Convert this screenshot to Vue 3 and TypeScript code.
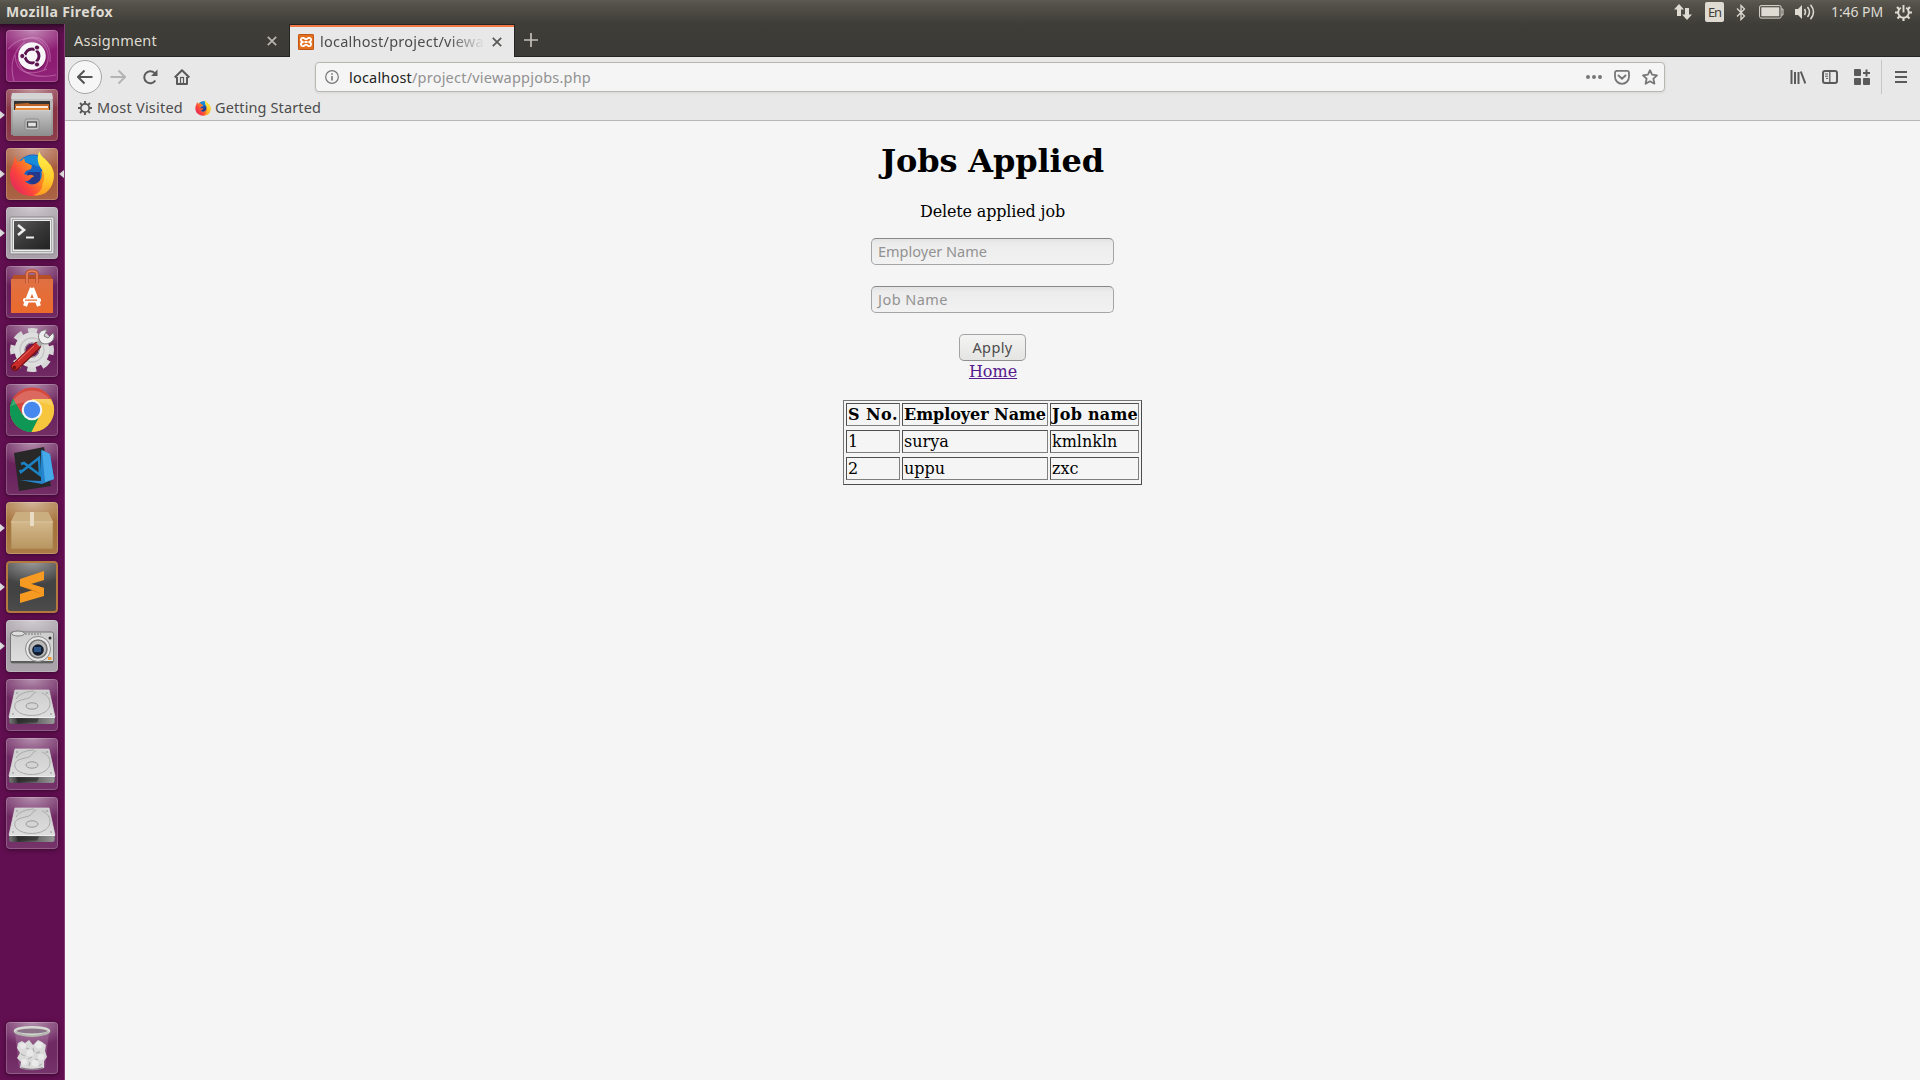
<script setup lang="ts">
type Tile = { kind: string; bg: string; running?: boolean; active?: boolean }

const tiles: Tile[] = [
  { kind: 'dash', bg: '#8c1b72' },
  { kind: 'files', bg: '#893544', running: true },
  { kind: 'firefox', bg: '#a75c3c', running: true, active: true },
  { kind: 'terminal', bg: '#a59ca5', running: true },
  { kind: 'software', bg: '#691f5b' },
  { kind: 'settings', bg: '#691f5b' },
  { kind: 'chrome', bg: '#6b235d' },
  { kind: 'code', bg: '#6b235d' },
  { kind: 'box', bg: '#a8743c', running: true },
  { kind: 'sublime', bg: '#434343', running: true },
  { kind: 'camera', bg: '#a79fa7', running: true },
  { kind: 'drive', bg: '#6f2963' },
  { kind: 'drive', bg: '#6f2963' },
  { kind: 'drive', bg: '#6f2963' },
  { kind: 'trash', bg: '#6f2963' },
]

const headers = [
  { text: 'S No.', width: 50 },
  { text: 'Employer Name', width: 142 },
  { text: 'Job name', width: 86 },
]
const rows = [
  ['1', 'surya', 'kmlnkln'],
  ['2', 'uppu', 'zxc'],
]

// Spaces the letters of a label so that it takes exactly the given width.
const vFit = {
  mounted(el: HTMLElement, binding: { value: number }) {
    const n = (el.textContent ?? '').length
    const w = el.getBoundingClientRect().width
    if (n > 0) el.style.letterSpacing = `${(binding.value - w) / n}px`
  },
}
</script>

<template>
  <div class="desktop">
    <header class="panel">
      <span v-fit="107" class="title">Mozilla Firefox</span>
      <div class="tray">
        <svg width="18" height="18" viewBox="0 0 18 18" fill="#dfdbd2"><path d="M5 1 0 6.500h3V13h4V6.500h3zM13 17l-5-5.500h3V5h4v6.500h3z" /></svg>
        <span class="lang"><span v-fit="13">En</span></span>
        <svg class="bt" width="10" height="17" viewBox="0 0 10 17" fill="none" stroke="#dfdbd2" stroke-width="1.300"><path d="M1 4.500 8.500 12 5 15.500v-14L8.500 5 1 12.500" /></svg>
        <svg class="bat" width="25" height="14" viewBox="0 0 25 14"><rect x=".6" y=".6" width="21.500" height="12.500" rx="1.500" fill="none" stroke="#dfdbd2" /><rect x="2.300" y="2.300" width="18" height="9" fill="#dfdbd2" /><path d="M22.500 4h1.500v6h-1.500" fill="none" stroke="#dfdbd2" /></svg>
        <svg class="vol" width="21" height="16" viewBox="0 0 21 16"><path d="M0 5h3l4-4v14l-4-4H0z" fill="#dfdbd2" /><g fill="none" stroke="#dfdbd2" stroke-width="1.500"><path d="M9.500 5q2 3 0 6" /><path d="M12.500 3q4 5 0 10" /><path d="M15.500.800q6 7.200 0 14.400" /></g></svg>
        <span v-fit="52" class="clock">1:46 PM</span>
        <svg class="cog" width="17" height="17" viewBox="0 0 17 17" fill="none" stroke="#dfdbd2"><path d="M5.800 3.800a5.300 5.300 0 1 0 5.400 0" stroke-width="1.900" /><path d="M8.500 1v7.500" stroke-width="1.900" /><path d="M2 3l2.200 2.200M15 3l-2.200 2.200M0 8.500h3M17 8.500h-3M2.500 14.500l2-2M14.500 14.500l-2-2M8.500 17v-3" stroke-width="2.200" /></svg>
      </div>
    </header>

    <div class="main">
      <aside class="launcher">
        <div v-for="(t, i) in tiles" :key="i" class="slot" :class="{ last: t.kind === 'trash' }">
          <span v-if="t.running" class="arrow" />
          <span v-if="t.active" class="arrow right" />
          <div class="tile" :class="t.kind" :style="{ backgroundColor: t.bg }">
            <svg width="52" height="52" viewBox="0 0 52 52">
              <template v-if="t.kind === 'dash'">
                <g fill="none" stroke="#e7a9da" stroke-opacity=".38" stroke-width="1.200">
                  <path d="M2 19C12 8 27 4 36 13c8 7 8 18 2 27" /><path d="M8 51C3 34 8 20 19 12" /><path d="M17 10c18-8 29 5 27 22" /><path d="M9 25c1 18 13 22 32 14" /><path d="M50 45C35 48 14 47 12 29" />
                </g>
                <circle cx="26" cy="27" r="14" fill="#44073a" fill-opacity=".35" />
                <circle cx="26" cy="26" r="13.800" fill="#f8f6f8" />
                <circle cx="26" cy="26" r="7" fill="none" stroke="#5c1450" stroke-width="3" />
                <g stroke="#f8f6f8" stroke-width="1.300"><path d="M26 26 14 26M26 26l6-10.500M26 26l6 10.500" /></g>
                <g fill="#5c1450" stroke="#f8f6f8"><circle cx="16.300" cy="26" r="2.600" /><circle cx="31" cy="17.500" r="2.600" /><circle cx="31" cy="34.500" r="2.600" /></g>
              </template>
              <template v-else-if="t.kind === 'files'">
                <path d="M6 5h40l1 9v32H5V14z" fill="url(#metal)" /><path d="M6 4h40l1 6H5z" fill="#d4d4d4" />
                <path d="M8 12h36v10H8z" fill="#343333" /><path d="M9 15l13-1 2 1h19v8H9z" fill="#bd6429" /><path d="M10 17h32v5H10z" fill="#f8ebdb" /><path d="M9 19h34v4H9z" fill="#e9893a" />
                <path d="M7 21h38v26H7z" fill="url(#metal)" /><path d="M7 21.500h38" stroke="#d0d0d0" />
                <rect x="19" y="30" width="14" height="11" rx="2" fill="#c1c1c1" stroke="#8b8b8b" /><rect x="21.500" y="33" width="9" height="5" fill="#e2e2e2" stroke="#4a4a4a" stroke-width="1.300" />
              </template>
              <template v-else-if="t.kind === 'firefox'">
                <use href="#fx" />
              </template>
              <template v-else-if="t.kind === 'terminal'">
                <rect x="4" y="10" width="44" height="37" rx="1.500" fill="#ddd" stroke="#8a858a" /><rect x="6.500" y="12.500" width="39" height="32" fill="#eee" stroke="#aaa" /><rect x="8" y="14" width="36" height="28.500" fill="url(#screen)" />
                <path d="M12 18l6 5-6 5" fill="none" stroke="#eee" stroke-width="2.600" /><path d="M20 30.500h8" stroke="#eee" stroke-width="2" />
              </template>
              <template v-else-if="t.kind === 'software'">
                <path d="M8 9h36l3 5H5z" fill="#b64f24" /><path d="M5 13h42v34H5z" fill="url(#bag)" />
                <path d="M21 17V8q0-3 5-3t5 3v9" fill="none" stroke="#ba4f26" stroke-width="3.500" /><path d="M21 17V8q0-3 5-3t5 3v9" fill="none" stroke="#e98561" stroke-width="1.600" />
                <path d="M26 22l-7 18M26 22l7 18" stroke="#fff" stroke-width="4.200" /><rect x="17" y="32" width="18" height="4.500" rx="2" fill="#fff" /><path d="M19 34.200h12" stroke="#e66a2c" stroke-width="1.300" />
              </template>
              <template v-else-if="t.kind === 'settings'">
                <circle cx="26" cy="25" r="18.500" fill="none" stroke="#d6d6d6" stroke-width="7" stroke-dasharray="8.530 6" transform="rotate(-13 26 25)" />
                <circle cx="26" cy="25" r="12.500" fill="none" stroke="#dedede" stroke-width="10" /><circle cx="26" cy="25" r="12" fill="none" stroke="#c4c4c4" stroke-width="1.300" /><circle cx="26" cy="25" r="7" fill="#691f5b" stroke="#aaa" />
                <path d="M9 42 31 21" stroke="#771215" stroke-width="8" stroke-linecap="round" /><path d="M9 41.500 30.500 21" stroke="#c92b29" stroke-width="6" stroke-linecap="round" /><path d="M12 36 28 21" stroke="#e6736e" stroke-width="1" />
                <path d="M32 20l5-5" stroke="#aaa" stroke-width="5" /><path d="M41 5c-6-1-10 4-8 9 2 6 8 6 12 3 3-2 4-6 2-9l-5 5-4-2z" fill="#eee" stroke="#777" />
                <circle cx="8.500" cy="42.500" r="1.700" fill="#6b1014" />
              </template>
              <template v-else-if="t.kind === 'chrome'">
                <circle cx="26" cy="26" r="22" fill="#f4c23a" /><path d="M26 26 6.950 15A22 22 0 0 1 45 15z" fill="#dc4c3f" /><path d="M26 26h10.500L25.500 48A22 22 0 0 1 6.950 15z" fill="#0f9855" /><path d="M26 26V15h19a22 22 0 0 1-19.500 33l10-17z" fill="#f7c63d" /><path d="M26 15h19.500a22 22 0 0 0-38.500-.500L16 31z" fill="#d4493e" /><path d="M7 15l9.500 16L26 37l5-2-6 13A22 22 0 0 1 7 15z" fill="#0f9855" />
                <circle cx="26" cy="26" r="10.300" fill="#f5f5f5" /><circle cx="26" cy="26" r="8.200" fill="#4688ee" />
                <path d="M5 22a22 22 0 0 1 42 0q-20-9-42 0" fill="#fff" opacity=".18" />
              </template>
              <template v-else-if="t.kind === 'code'">
                <path d="M8 10 38 4l7 39-32 5z" fill="#282829" /><path d="M35 7l9 4 4 25-12 5-22-4 21 1z" fill="#2584cb" /><path d="M36 7l8 4 4 25-9 3z" fill="#45a9ea" />
                <path d="M15 21l3-1 16 12-1-17-18 14-1-2" fill="none" stroke="#1b82c4" stroke-width="2.500" />
              </template>
              <template v-else-if="t.kind === 'box'">
                <path d="M10 10h32l5 10v27H5V20z" fill="#d8be91" /><path d="M10 10h32l5 10H5z" fill="#cbae80" /><path d="M5 20h42v27H5z" fill="url(#carton)" />
                <rect x="5" y="20" width="42" height="27" fill="none" stroke="#a7854f" stroke-opacity=".7" /><path d="M5 20h42" stroke="#e8d6b5" /><path d="M24 10h4v14h-4z" fill="#e9dcc2" />
              </template>
              <template v-else-if="t.kind === 'sublime'">
                <path d="M14 18 38 10v9l-13 4 13 4v8L14 42v-9l13-4-13-4z" fill="#f69a22" /><path d="M14 25v-7l11 5 13 4v7l-11-5z" fill="#f69a22" /><path d="M14 25l24 9-11-5 0 0z" fill="#db7a16" />
              </template>
              <template v-else-if="t.kind === 'camera'">
                <rect x="4.500" y="12" width="43" height="31" rx="2" fill="url(#disk)" stroke="#777" /><path d="M5 42h42" stroke="#5e5e5e" stroke-width="1.800" /><ellipse cx="12" cy="13.500" rx="6.500" ry="2.500" fill="#ddd" stroke="#777" /><path d="M19 14h16" stroke="#777" stroke-dasharray="2 1" />
                <circle cx="32" cy="29" r="12.500" fill="#e8e8e8" stroke="#888" /><circle cx="32" cy="29" r="9" fill="#bbb" stroke="#777" stroke-width="1.600" /><circle cx="32" cy="30" r="5.800" fill="#131d2d" /><rect x="28" y="27" width="7" height="5" fill="#2c5589" />
                <circle cx="44" cy="18" r="1.500" fill="#292929" /><rect x="42" y="37" width="3.500" height="3" fill="#ef9a2e" />
              </template>
              <template v-else-if="t.kind === 'drive'">
                <path d="M9 11h34l6 27v6H3v-6z" fill="#555" /><path d="M9 11h34l6 27H3z" fill="url(#disk)" stroke="#ddd" stroke-width=".7" /><path d="M3.500 38.500h45V43a2 2 0 0 1-2 2H5.500a2 2 0 0 1-2-2z" fill="url(#edge)" />
                <path d="M10 39.500h23l-2 4H12z" fill="#292929" opacity=".65" /><path d="M3 38.500h46" stroke="#eee" />
                <path d="M10 20C14 13 25 12 28 12M36 14c9 3 11 14 3 19-9 6-27 4-30-4-2-8 8-8 14-10 4-2 3-5 7-6" fill="none" stroke="#a9a9a9" />
                <ellipse cx="26" cy="27" rx="6" ry="3.200" fill="#d4d4d4" stroke="#999" /><g fill="#888"><circle cx="11" cy="14" r=".8" /><circle cx="41" cy="14" r=".8" /><circle cx="7" cy="35" r=".8" /><circle cx="45" cy="35" r=".8" /></g>
              </template>
              <template v-else>
                <path d="M9 10h34l-4 36H13z" fill="#b98fb4" fill-opacity=".33" /><path d="M12 21l4-2 3 2 4-3 4 5 5-5 4 2 4 3-1 6 2 6-3 4v7q-12 3-24 0l1-6-4-4 3-5-3-5z" fill="#dadada" />
                <g fill="#e9e9e9"><circle cx="17" cy="24" r="3" /><circle cx="33" cy="23" r="3.500" /><circle cx="24" cy="31" r="3.500" /><circle cx="35" cy="35" r="3" /><circle cx="18" cy="40" r="3" /><circle cx="29" cy="41" r="3.500" /></g>
                <path d="M20 26l3 1M27 26l1 4M30 31l4-1M15 32l4 2M22 37l4-2M32 38l-3-1M23 44l1-4M36 42l-3 2" fill="none" stroke="#b4b4b4" stroke-width="1.300" /><path d="M15 46q11 3 22 0" fill="none" stroke="#8d7a8b" stroke-width="1.500" />
                <ellipse cx="26" cy="9" rx="17" ry="3.800" fill="#8c7588" stroke="#d6d8d3" stroke-width="2.600" /><path d="M9 10q17 8 34 0" fill="none" stroke="#b5b8b1" stroke-width="2" />
              </template>
            </svg>
          </div>
        </div>
      </aside>

      <section class="browser">
        <nav class="tabs">
          <div class="tab">
            <span v-fit="83" class="label">Assignment</span>
            <svg class="x" width="10" height="10" viewBox="0 0 10 10"><path d="M.800.800l8.400 8.400M9.200.800.800 9.200" stroke="#bab6af" stroke-width="1.700" /></svg>
          </div>
          <div class="tab current">
            <svg class="fav" width="16" height="16" viewBox="0 0 16 16"><rect width="16" height="16" rx="1.500" fill="#e4701e" /><rect x=".5" y=".5" width="15" height="15" rx="1" fill="none" stroke="#bd5718" /><path d="M5.500 8C2 7.500 2.300 3.800 5 3.900c1.600.1 2 1.500 3 1.500s1.400-1.400 3-1.500C13.700 3.800 14 7.500 10.500 8c3.500.5 3.200 4.200.5 4.100-1.600-.1-2-1.500-3-1.500s-1.400 1.400-3 1.500C2.300 12.200 2 8.500 5.500 8zM6.500 8h3" fill="none" stroke="#fff" stroke-width="1.800" /></svg>
            <span class="clip"><span v-fit="173" class="label">localhost/project/viewap</span></span>
            <svg class="x" width="10" height="10" viewBox="0 0 10 10"><path d="M.800.800l8.400 8.400M9.200.800.800 9.200" stroke="#5b5b58" stroke-width="1.800" /></svg>
          </div>
          <svg class="plus" width="14" height="14" viewBox="0 0 14 14"><path d="M7 0v14M0 7h14" stroke="#c3bfb9" stroke-width="1.700" /></svg>
        </nav>

        <div class="toolbar">
          <span class="back"><svg width="16" height="16" viewBox="0 0 16 16" fill="none" stroke="#555" stroke-width="2"><path d="M15.500 8H1.500M7.500 1.500 1 8l6.500 6.500" /></svg></span>
          <svg class="fwd" width="16" height="16" viewBox="0 0 16 16" fill="none" stroke="#b4b4b4" stroke-width="2"><path d="M.500 8h14M8.500 1.500 15 8l-6.500 6.500" /></svg>
          <svg class="reload" width="16" height="16" viewBox="0 0 16 16" fill="none" stroke="#5a5a5a" stroke-width="2"><path d="M13.300 11.500A6 6 0 1 1 12.500 4" /><path d="M15.500.500V7H9z" fill="#5a5a5a" stroke="none" /></svg>
          <svg class="home" width="16" height="16" viewBox="0 0 16 16" fill="none" stroke="#5a5a5a" stroke-width="2"><path d="M.700 8.500 8 1.300l7.300 7.200M3 8v7h10V8" stroke-linejoin="round" /><rect x="6.500" y="8.500" width="3" height="6" stroke-width="1.200" /></svg>
          <div class="url">
            <svg width="14" height="14" viewBox="0 0 14 14"><circle cx="7" cy="7" r="6.300" fill="none" stroke="#777" stroke-width="1.200" /><path d="M7 6v4.500M7 3.200v1.600" stroke="#777" stroke-width="1.600" /></svg>
            <span v-fit="63" class="host">localhost</span><span v-fit="179" class="path">/project/viewappjobs.php</span>
            <svg class="acts" width="72" height="16" viewBox="0 0 72 16" fill="none" stroke="#777">
              <g fill="#777" stroke="none"><circle cx="2" cy="8" r="2" /><circle cx="8" cy="8" r="2" /><circle cx="14" cy="8" r="2" /></g>
              <path d="M30 1.500h11q2 0 2 2V7.500a7 7 0 0 1-14 0V3.500q0-2 2-2z" stroke-width="1.800" transform="translate(0 .3)" /><path d="M32.500 6.500 36 9.800l3.500-3.300" stroke-width="1.900" stroke-linecap="round" />
              <path d="M64 1.200l2.100 4.500 4.900.600-3.600 3.400 1 5L64 12.300l-4.400 2.400 1-5L57 6.300l4.900-.6z" stroke-width="1.800" stroke-linejoin="round" />
            </svg>
          </div>
          <div class="tools">
            <svg width="16" height="16" viewBox="0 0 16 16" stroke="#5a5a5a" stroke-width="2"><path d="M1.500 1v14M5 3v12M8.500 3v12M10.800 2.500l4.500 12" /></svg>
            <svg width="16" height="16" viewBox="0 0 16 16" fill="none" stroke="#5a5a5a"><rect x="1" y="2" width="14" height="12" rx="2" stroke-width="2" /><path d="M7.800 2v12" stroke-width="1.300" /><path d="M3 5h3M3 7.200h3M4 9.400h2" /></svg>
            <svg width="16" height="16" viewBox="0 0 16 16" fill="#5a5a5a"><rect y="0" width="7" height="7" rx="1" /><rect y="9" width="7" height="7" rx="1" /><rect x="9" y="9" width="7" height="7" rx="1" /><path d="M11.500 0.500h2v2.500H16v2h-2.500v2.500h-2V5H9V3h2.500z" /></svg>
            <i class="sep" />
            <svg class="burger" width="12" height="12" viewBox="0 0 12 12" stroke="#5a5a5a" stroke-width="2"><path d="M0 1h12M0 6h12M0 11h12" /></svg>
          </div>
        </div>

        <div class="bookmarks">
          <svg width="14" height="14" viewBox="0 0 14 14" fill="none" stroke="#555"><circle cx="7" cy="7" r="4.200" stroke-width="1.700" /><path d="M7 0v2.500M7 14v-2.500M0 7h2.500M14 7h-2.500M2 2l1.800 1.800M12 12l-1.800-1.800M2 12l1.800-1.800M12 2l-1.800 1.800" stroke-width="1.900" /></svg>
          <span v-fit="86" class="label">Most Visited</span>
          <svg class="fox" width="16" height="16" viewBox="3 3 46 46"><use href="#fx" /></svg>
          <span v-fit="106" class="label">Getting Started</span>
        </div>

        <main class="page">
          <h1><span v-fit="223">Jobs Applied</span></h1>
          <p><span v-fit="145">Delete applied job</span></p>
          <div class="field"><span v-fit="109">Employer Name</span></div>
          <div class="field"><span v-fit="70">Job Name</span></div>
          <button type="button"><span v-fit="40">Apply</span></button>
          <a>Home</a>
          <table>
            <tbody>
              <tr><th v-for="h in headers" :key="h.text"><span v-fit="h.width">{{ h.text }}</span></th></tr>
              <tr v-for="r in rows" :key="r[0]"><td v-for="c in r" :key="c">{{ c }}</td></tr>
            </tbody>
          </table>
        </main>
      </section>
    </div>

    <svg class="defs" width="0" height="0">
      <defs>
        <linearGradient id="metal" x2="0" y2="1"><stop stop-color="#c7c7c7" /><stop offset="1" stop-color="#8d8d8d" /></linearGradient>
        <linearGradient id="screen" x2="1" y2="1"><stop stop-color="#5a5a5a" /><stop offset=".5" stop-color="#383838" /><stop offset="1" stop-color="#222" /></linearGradient>
        <linearGradient id="bag" x2="0" y2="1"><stop stop-color="#df7044" /><stop offset="1" stop-color="#ea6a2b" /></linearGradient>
        <linearGradient id="carton" x2="0" y2="1"><stop stop-color="#d3b88a" /><stop offset="1" stop-color="#b79560" /></linearGradient>
        <linearGradient id="disk" x2="0" y2="1"><stop stop-color="#cdcdcd" /><stop offset="1" stop-color="#dedede" /></linearGradient>
        <linearGradient id="edge"><stop stop-color="#777" /><stop offset=".2" stop-color="#333" /><stop offset="1" stop-color="#999" /></linearGradient>
        <linearGradient id="flame" x1=".9" y1=".2" x2=".1" y2=".75"><stop stop-color="#ffc52e" /><stop offset=".4" stop-color="#ff8a1f" /><stop offset=".75" stop-color="#fb453c" /><stop offset="1" stop-color="#ea2f55" /></linearGradient>
        <linearGradient id="tail" x2="0" y2="1"><stop stop-color="#fff04d" /><stop offset=".6" stop-color="#ffd02e" /><stop offset="1" stop-color="#ff9a20" /></linearGradient>
        <symbol id="fx" viewBox="0 0 52 52" width="52" height="52">
          <circle cx="27" cy="23" r="16.500" fill="#1764c4" /><path d="M14 13C20 6 32 5 37 12L33 19 26 16z" fill="#179be4" opacity=".7" />
          <path d="M22 24h12v10q-6 6-14-2z" fill="#25398c" />
          <path d="M9 8l2.500 6 4.500-1.500L18 10l1 4 7 3.500-1 3.500-5 2-2 3 4 1.500c3-1.500 5-.5 6 1-4 1-3 5-9 4.500 3 4 9 4.500 13 1.500 4-3 4-7 3.500-11L44 16c4 6 5 11 3 17-3 9-11 15-21 15C13 48 4 39 4 27c0-4 1-8 3-11z" fill="url(#flame)" />
          <path d="M33.500 3c0 5 6 7 10 13 6 9 6 22-4 29-4 2-9 3-12 2 6-2 9-6 9-11 3-6 2-11-1-15-4-5-5-12-2-18z" fill="url(#tail)" />
        </symbol>
      </defs>
    </svg>
  </div>
</template>

<style>
body { overflow: hidden; }
</style>

<style scoped>
* { box-sizing: border-box; }
svg { display: block; flex: none; }
.desktop { width: 1920px; height: 1080px; display: flex; flex-direction: column; font: 14.5px/20px "Noto Sans", "Open Sans", sans-serif; color: #4c4c4c; overflow: hidden; }
.defs { position: absolute; }
span { white-space: nowrap; }
.panel { flex: none; height: 24px; padding: 0 8px 0 6px; display: flex; align-items: center; justify-content: space-between; background: linear-gradient(#5e5b52, #56534b 3px, #3e3d38); color: #dfdbd2; }
.title { font-weight: 700; font-size: 14px; }
.tray { display: flex; align-items: center; width: 238px; height: 24px; }
.lang { width: 20px; height: 20px; margin-left: 13px; background: #dfdbd2; border-radius: 2px; color: #3f3e39; font-size: 13px; text-align: center; }
.bt { margin-left: 12px; }
.bat { margin-left: 13px; }
.vol { margin-left: 11px; }
.clock { margin-left: 15px; font-size: 14px; }
.cog { margin-left: 12px; }
.main { display: flex; flex: 1; min-height: 0; }

.launcher { width: 65px; flex: none; padding-top: 6px; display: flex; flex-direction: column; background: linear-gradient(#2e0a27, #530e45 5px, #610f50 12px); border-right: 1px solid #823d76; }
.slot { position: relative; height: 59px; padding-left: 6px; flex: none; }
.slot.last { margin-top: auto; height: 58px; }
.tile { position: relative; width: 52px; height: 52px; border-radius: 4px; overflow: hidden; background-image: radial-gradient(ellipse 40px 24px at 50% 0, rgba(255, 255, 255, .48), transparent), linear-gradient(transparent 60%, rgba(255, 255, 255, .05)); box-shadow: inset 0 0 0 1px rgba(255, 255, 255, .2), 0 1px 4px rgba(30, 0, 25, .6); }
.tile.sublime { box-shadow: inset 0 0 0 2px #b5783e, 0 1px 4px rgba(30, 0, 25, .6); }
.arrow { position: absolute; left: 0; top: 22px; border: 4px solid transparent; border-left: 5px solid #ddd; border-right: 0; }
.arrow.right { left: auto; right: 0; border: 4px solid transparent; border-right: 5px solid #ddd; border-left: 0; }

.browser { flex: 1; min-width: 0; display: flex; flex-direction: column; background: #e8e8e8; }
.tabs { height: 33px; flex: none; display: flex; background: linear-gradient(#3e3d38, #3b3a36); border-bottom: 1px solid #262422; }
.tab { width: 224px; height: 32px; padding: 2px 12px 0 9px; display: flex; align-items: center; justify-content: space-between; color: #dfdbd2; }
.tab .label { margin-bottom: 2px; }
.tab.current { width: 226px; height: 33px; padding: 1px 12px 0 8px; background: #e8e8e8; border: 1px solid #262422; border-width: 1px 1px 0; color: #4c4c4c; box-shadow: inset 0 2px #f07746; }
.tab.current .x { margin-left: 7px; }
.clip { width: 165px; margin-left: 6px; overflow: hidden; mask-image: linear-gradient(90deg, #000 78%, transparent); }
.clip .label { display: block; width: max-content; }
.plus { margin: 9px 0 0 9px; }

.toolbar { height: 38px; flex: none; padding: 0 13px 0 3px; margin-top: 1px; display: flex; align-items: center; }
.back { width: 34px; height: 34px; border: 1px solid #a5a5a5; border-radius: 50%; background: #f6f6f6; display: grid; place-items: center; }
.fwd { margin-left: 8px; }
.reload { margin-left: 16px; }
.home { margin-left: 16px; }
.url { width: 1350px; height: 30px; margin: 0 0 0 125px; padding: 0 6px 0 9px; display: flex; align-items: center; background: #f5f5f5; border: 1px solid #b9b6b1; border-radius: 4px; box-shadow: 0 1px 3px rgba(0, 0, 0, .08); }
.host { margin-left: 10px; color: #222; }
.path { color: #929292; }
.acts { margin-left: auto; }
.tools { margin-left: auto; display: flex; align-items: center; gap: 16px; }
.sep { width: 1px; height: 34px; background: #c6c6c6; margin-left: -5px; }
.burger { margin-left: -3px; }
.bookmarks { height: 25px; flex: none; padding: 0 0 1px 13px; display: flex; align-items: center; border-bottom: 1px solid #b9b6b3; }
.bookmarks .label { margin: 0 0 1px 5px; }
.bookmarks .fox { margin-left: 12px; }
.bookmarks .fox + .label { margin-left: 4px; }

.page { flex: 1; background: #f5f5f5; color: #000; font: 16px/19px "DejaVu Serif", serif; display: flex; flex-direction: column; align-items: center; }
h1 { font: bold 32px/37px "DejaVu Serif", serif; margin: 22px 0 22px; }
p { margin: 0 0 17px; }
.field { width: 243px; height: 27px; margin-bottom: 21px; padding: 0 6px; border: 1px solid #a5a5a5; border-top-color: #888; border-radius: 5px; background: linear-gradient(#e3e3e3, #ececec 5px, #f2f2f2); font: 14.5px/25px "Noto Sans", sans-serif; color: #929292; }
button { width: 67px; height: 27px; padding: 0; border: 1px solid #a3a3a3; border-bottom-color: #8f8f8f; border-radius: 5px; background: linear-gradient(#f4f4f4, #e4e4e2); font: 14.5px/25px "Noto Sans", sans-serif; color: #4c4c4c; }
a { color: #551a8b; text-decoration: underline; margin: 1px 0 19px 1px; }
table { border: 1px solid; border-color: #777 #4b4b4b #4b4b4b #777; padding: 2px 2px 4px; }
table, tbody { display: block; }
tbody { display: grid; grid-template-columns: 54px 146px 89px; grid-auto-rows: 23px; gap: 4px 2px; }
tr { display: contents; }
th, td { display: block; padding: 1px; border: 1px solid; border-color: #4f4f4f #7f7f7f #7f7f7f #4f4f4f; text-align: left; white-space: nowrap; }
</style>
